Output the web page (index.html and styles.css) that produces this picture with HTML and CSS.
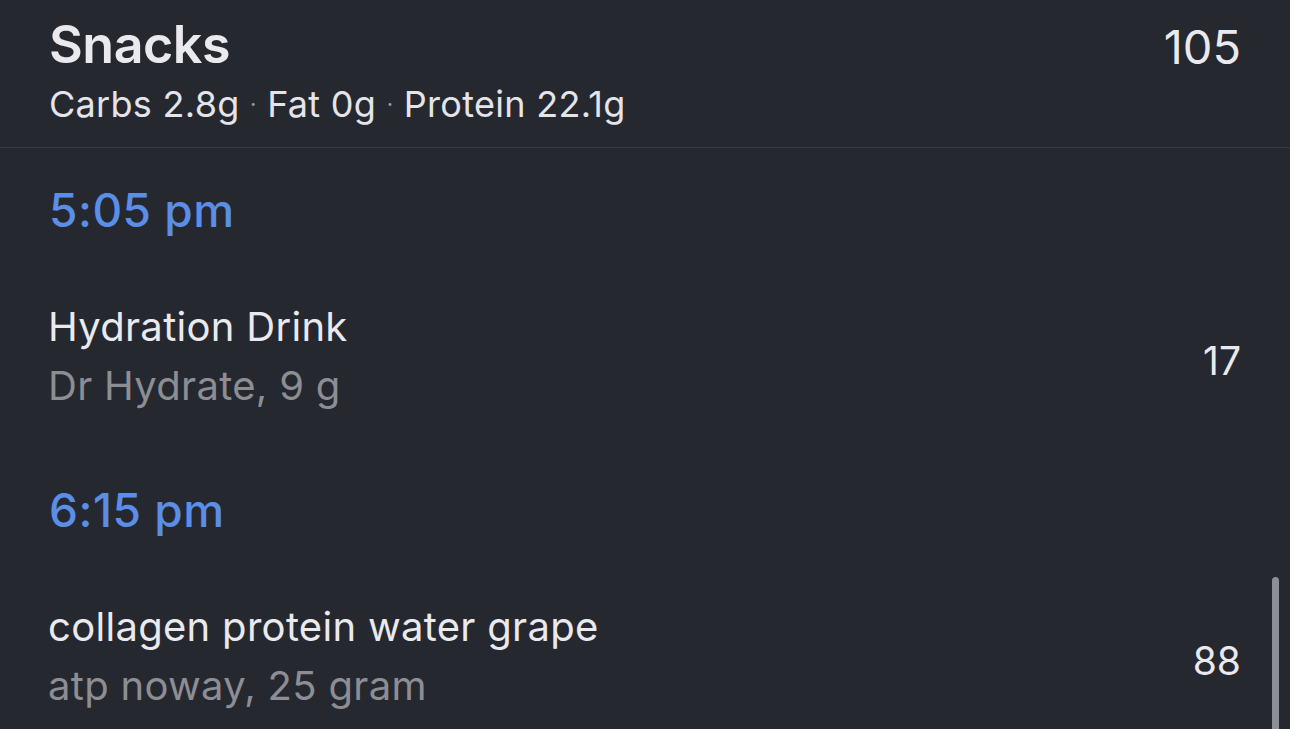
FILE: index.html
```html
<!DOCTYPE html>
<html>
<head>
<meta charset="utf-8">
<link rel="stylesheet" href="styles.css">
</head>
<body>
<div class="screen">
  <header class="meal">
    <div class="meal-text">
      <div class="meal-title">Snacks</div>
      <div class="meal-macros">Carbs 2.8g <span class="dot">·</span> Fat 0g <span class="dot">·</span> Protein 22.1g</div>
    </div>
    <div class="meal-total">105</div>
  </header>
  <div class="time-row"><span class="time">5:05 pm</span></div>
  <div class="item-row">
    <div class="item-text">
      <div class="item-name">Hydration Drink</div>
      <div class="item-sub">Dr Hydrate, 9 g</div>
    </div>
    <div class="item-cal">17</div>
  </div>
  <div class="time-row"><span class="time">6:15 pm</span></div>
  <div class="item-row">
    <div class="item-text">
      <div class="item-name">collagen protein water grape</div>
      <div class="item-sub">atp noway, 25 gram</div>
    </div>
    <div class="item-cal">88</div>
  </div>
  <div class="scrollbar"></div>
</div>
</body>
</html>
```
FILE: styles.css
```css
html, body {
  margin: 0;
  padding: 0;
  background: #262830;
}
.screen {
  position: relative;
  width: 1290px;
  height: 729px;
  overflow: hidden;
  background: #262830;
  font-family: Inter, "Noto Sans", sans-serif;
  color: #e9e9ee;
}
.meal {
  height: 148px;
  box-sizing: border-box;
  border-bottom: 1px solid #3a3c44;
  display: flex;
  justify-content: space-between;
  align-items: flex-start;
  padding: 12px 49px 0 49px;
}
.meal-title {
  font-size: 52px;
  font-weight: 600;
  line-height: 66px;
  letter-spacing: -0.5px;
}
.meal-macros {
  font-size: 36px;
  line-height: 52px;
  letter-spacing: 0.3px;
  color: #e4e4ea;
}
.dot {
  color: #9a9aa0;
  font-size: 22px;
  vertical-align: 5px;
}
.meal-total {
  font-size: 47px;
  line-height: 66px;
  padding-top: 2px;
}
.time-row {
  height: 124px;
  display: flex;
  align-items: center;
  padding-left: 49px;
}
.time {
  font-size: 46px;
  font-weight: 500;
  letter-spacing: 0.5px;
  color: #5b8ee6;
}
.item-row {
  height: 176px;
  display: flex;
  align-items: center;
  justify-content: space-between;
  padding: 0 49px 0 48px;
}
.item-text {
  padding-bottom: 9px;
}
.item-name {
  font-size: 40px;
  line-height: 59px;
  letter-spacing: 0.3px;
}
.item-sub {
  font-size: 40px;
  line-height: 59px;
  letter-spacing: 0.3px;
  color: #8d8e94;
}
.item-cal {
  font-size: 39px;
}
.scrollbar {
  position: absolute;
  left: 1272px;
  top: 577px;
  width: 7px;
  height: 170px;
  border-radius: 4px;
  background: #8e8f95;
}
```
